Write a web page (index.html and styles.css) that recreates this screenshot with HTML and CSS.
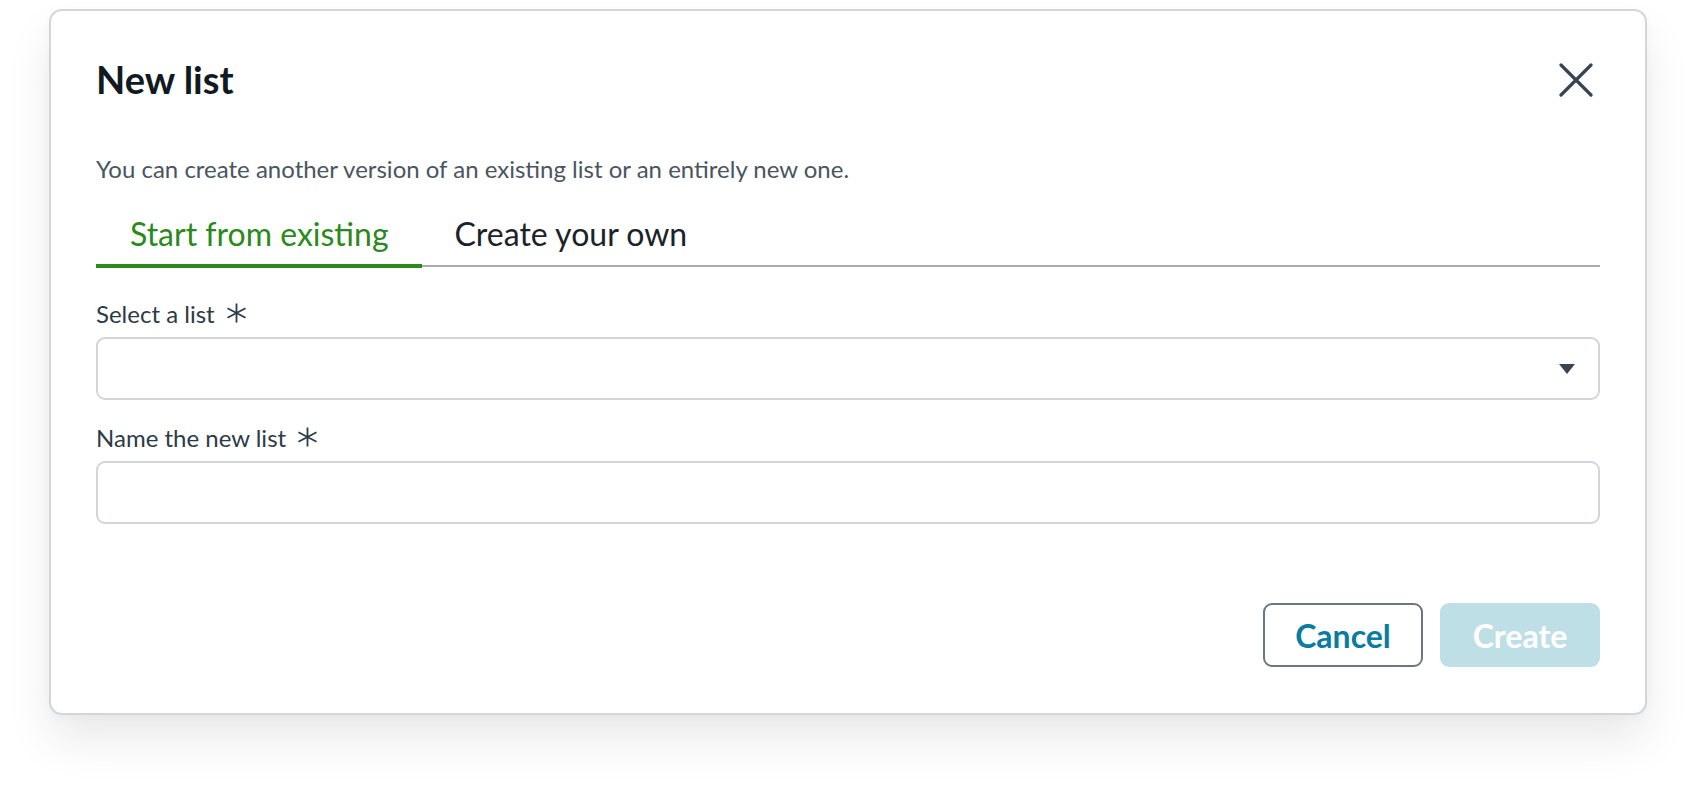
FILE: index.html
```html
<!DOCTYPE html>
<html lang="en">
<head>
<meta charset="utf-8">
<title>New list</title>
<link rel="stylesheet" href="styles.css">
</head>
<body>
<div class="page">
  <div class="dialog" role="dialog" aria-labelledby="dlg-title">
    <header class="dialog-header">
      <h1 id="dlg-title" class="dialog-title">New list</h1>
      <button class="close-btn" aria-label="Close">
        <svg width="34" height="34" viewBox="0 0 34 34" aria-hidden="true">
          <path d="M2 2 L32 32 M32 2 L2 32" stroke="#38454f" stroke-width="3.2" stroke-linecap="round" fill="none"/>
        </svg>
      </button>
    </header>
    <p class="dialog-desc">You can create another version of an existing list or an entirely new one.</p>
    <div class="tabs" role="tablist">
      <div class="tab tab-active" role="tab">Start from existing</div>
      <div class="tab" role="tab">Create your own</div>
    </div>
    <div class="field field-first">
      <label class="field-label">Select a list
        <svg class="req" width="21" height="20" viewBox="0 0 21 20" aria-hidden="true">
          <path d="M10.5 0.5 V19.5 M1.5 5.3 L19.5 14.7 M1.5 14.7 L19.5 5.3" stroke="#2d3b45" stroke-width="1.8" fill="none"/>
        </svg>
      </label>
      <div class="control select">
        <svg class="caret" width="16" height="10" viewBox="0 0 16 10" aria-hidden="true">
          <path d="M0 0 H16 L8 10 Z" fill="#38454f"/>
        </svg>
      </div>
    </div>
    <div class="field">
      <label class="field-label">Name the new list
        <svg class="req" width="21" height="20" viewBox="0 0 21 20" aria-hidden="true">
          <path d="M10.5 0.5 V19.5 M1.5 5.3 L19.5 14.7 M1.5 14.7 L19.5 5.3" stroke="#2d3b45" stroke-width="1.8" fill="none"/>
        </svg>
      </label>
      <div class="control"></div>
    </div>
    <footer class="dialog-footer">
      <button class="btn btn-secondary">Cancel</button>
      <button class="btn btn-primary" disabled>Create</button>
    </footer>
  </div>
</div>
</body>
</html>
```
FILE: styles.css
```css
html, body {
  margin: 0;
  padding: 0;
  background: #ffffff;
}
body {
  font-family: Lato, "Liberation Sans", sans-serif;
  color: #2d3b45;
}
.page {
  box-sizing: border-box;
  min-height: 804px;
  padding: 9px 49px 0 49px;
}
.dialog {
  box-sizing: border-box;
  width: 1598px;
  height: 706px;
  border: 2px solid #d2d6d9;
  border-radius: 13px;
  background: #fff;
  box-shadow: 0 26px 46px rgba(0, 0, 0, 0.085), 0 2px 10px rgba(0, 0, 0, 0.03);
  padding: 0 45px;
  display: flex;
  flex-direction: column;
}
.dialog-header {
  display: flex;
  align-items: flex-start;
  justify-content: space-between;
  height: 143px;
}
.dialog-title {
  margin: 46px 0 0 0;
  font-size: 38px;
  font-weight: 700;
  color: #111a20;
  line-height: 44px;
}
.close-btn {
  border: 0;
  background: none;
  padding: 0;
  margin: 52px 7px 0 0;
  width: 34px;
  height: 34px;
  display: flex;
  cursor: pointer;
}
.dialog-desc {
  margin: 0;
  font-size: 24px;
  line-height: 30px;
  color: #4a5560;
}
.tabs {
  display: flex;
  border-bottom: 2px solid #a6adb2;
}
.tab {
  font-size: 32px;
  line-height: 40px;
  padding: 30px 33px 14px 33px;
  margin-bottom: -3px;
  color: #1b2329;
}
.tab-active {
  color: #2a8a1c;
  box-shadow: inset 0 -4px 0 #2a8a1c;
  padding-left: 34px;
}
.field {
  display: flex;
  flex-direction: column;
  margin-top: 23px;
}
.field-first {
  margin-top: 32px;
}
.field-label {
  font-size: 24px;
  line-height: 30px;
  color: #2d3b45;
  margin-bottom: 8px;
  display: flex;
  align-items: center;
}
.req {
  margin-left: 11px;
  margin-top: -2px;
}
.control {
  box-sizing: border-box;
  height: 63px;
  border: 2px solid #d2d6d9;
  border-radius: 9px;
  display: flex;
  align-items: center;
  justify-content: flex-end;
}
.caret {
  margin-right: 23px;
}
.dialog-footer {
  margin-top: auto;
  margin-bottom: 46px;
  display: flex;
  justify-content: flex-end;
  gap: 17px;
}
.btn {
  box-sizing: border-box;
  width: 160px;
  height: 64px;
  border-radius: 9px;
  font-family: Lato, "Liberation Sans", sans-serif;
  font-size: 32px;
  font-weight: 700;
  cursor: pointer;
  display: flex;
  align-items: center;
  justify-content: center;
  padding: 0;
}
.btn-secondary {
  background: #fff;
  border: 2px solid #6b7780;
  color: #0a7c9f;
}
.btn-primary {
  background: #bfdfe7;
  border: 0;
  color: #ffffff;
}
```
